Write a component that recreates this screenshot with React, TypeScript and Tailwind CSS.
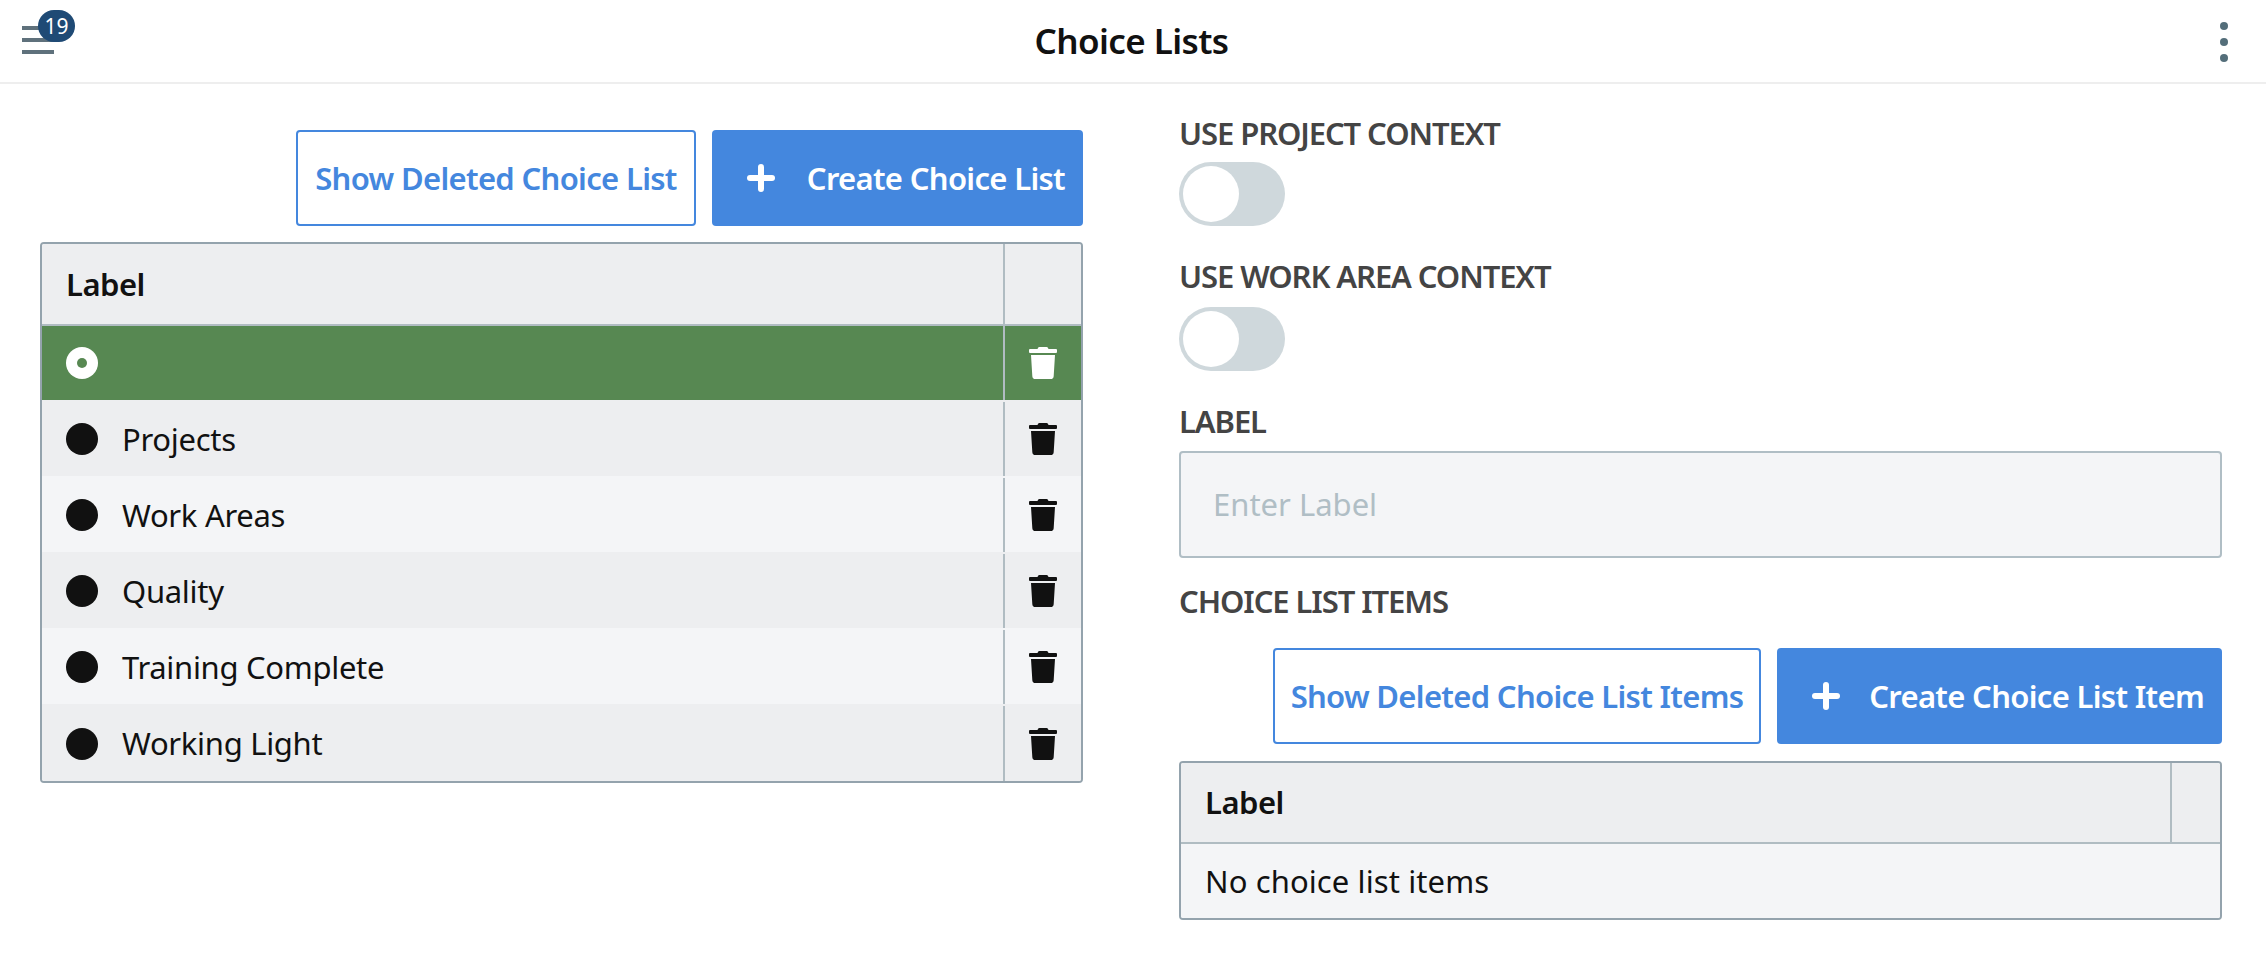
import React from "react";

const font = "font-['Noto_Sans',sans-serif]";

function TrashIcon({ className }: { className: string }) {
  return (
    <svg viewBox="0 0 448 512" className={className} fill="currentColor">
      <path d="M432 32H312l-9.4-18.7A24 24 0 0 0 281.1 0H166.8a23.72 23.72 0 0 0-21.4 13.3L136 32H16A16 16 0 0 0 0 48v32a16 16 0 0 0 16 16h416a16 16 0 0 0 16-16V48a16 16 0 0 0-16-16zM53.2 467a48 48 0 0 0 47.9 45h245.8a48 48 0 0 0 47.9-45L416 128H32z" />
    </svg>
  );
}

function PlusIcon() {
  return (
    <svg viewBox="0 0 28 28" className="w-[28px] h-[28px] shrink-0" fill="white">
      <rect x="11" y="0" width="6" height="28" rx="3" />
      <rect x="0" y="11" width="28" height="6" rx="3" />
    </svg>
  );
}

function Toggle() {
  return (
    <div className="w-[106px] h-[64px] rounded-full bg-[#cfd8dc] p-[4px]">
      <div className="w-[56px] h-[56px] rounded-full bg-white" />
    </div>
  );
}

function FieldLabel({ children }: { children: React.ReactNode }) {
  return <div className="h-[40px] text-[31px] leading-[38px] font-semibold text-[#444444] tracking-[-1.1px]">{children}</div>;
}

function Buttons({ show, create, showWidth, createWidth }: { show: string; create: string; showWidth: string; createWidth: string }) {
  return (
    <div className="flex justify-end gap-[16px]">
      <div className={`h-[96px] rounded-[4px] border-2 border-[#4487de] bg-white flex items-center justify-center text-[#4487de] text-[31px] font-semibold tracking-[-0.68px] whitespace-nowrap ${showWidth}`}>
        {show}
      </div>
      <div className={`h-[96px] rounded-[4px] bg-[#4487de] flex items-center justify-between pl-[35px] pr-[18px] text-white text-[31px] font-semibold tracking-[-0.68px] whitespace-nowrap ${createWidth}`}>
        <PlusIcon />
        {create}
      </div>
    </div>
  );
}

const rows = ["", "Projects", "Work Areas", "Quality", "Training Complete", "Working Light"];

export default function App() {
  return (
    <div className={`w-[2266px] h-[964px] bg-white overflow-hidden ${font} text-[#111111]`}>
      <header className="relative h-[84px] border-b-2 border-[#eeeeee] flex items-center justify-center pr-[3px]">
        <div className="absolute left-[22px] top-[26px] w-[32px] flex flex-col gap-[8px]">
          <div className="h-[4px] bg-[#5f717c]" />
          <div className="h-[4px] bg-[#5f717c]" />
          <div className="h-[4px] bg-[#5f717c]" />
        </div>
        <div className="absolute left-[38px] top-[10px] w-[37px] h-[32px] rounded-full bg-[#1f4a75] text-white text-[21px] leading-[32px] text-center">19</div>
        <div className="text-[35px] font-semibold tracking-[-0.6px] text-[#111111]">Choice Lists</div>
        <div className="absolute left-[2220px] top-[22px] flex flex-col gap-[8px]">
          <div className="w-[8px] h-[8px] rounded-full bg-[#546e7a]" />
          <div className="w-[8px] h-[8px] rounded-full bg-[#546e7a]" />
          <div className="w-[8px] h-[8px] rounded-full bg-[#546e7a]" />
        </div>
      </header>
      <main className="flex pl-[40px] pr-[44px] pt-[46px] gap-[96px]">
        <section className="w-[1043px] shrink-0">
          <Buttons show="Show Deleted Choice List" create="Create Choice List" showWidth="w-[400px]" createWidth="w-[371px]" />
          <div className="mt-[16px] border-2 border-[#94a3ad] rounded-[4px] overflow-hidden">
            <div className="flex h-[82px] bg-[#edeef0] border-b-2 border-[#b0bcc2]">
              <div className="flex-1 flex items-center pl-[24px] text-[31px] font-semibold tracking-[-0.5px]">Label</div>
              <div className="w-[78px] border-l-2 border-[#b0bcc2]" />
            </div>
            {rows.map((label, i) => {
              const selected = i === 0;
              const last = i === rows.length - 1;
              const bg = selected
                ? "h-[74px] bg-[#578852] text-white"
                : i % 2 === 1
                  ? "bg-[#edeef0] border-t-2 border-[#edeef0]"
                  : "bg-[#f4f5f7] border-t-2 border-[#f4f5f7]";
              const height = selected ? "" : last ? "h-[77px]" : "h-[76px]";
              return (
                <div key={i} className={`flex ${bg} ${height}`}>
                  <div className="flex-1 flex items-center pl-[24px] gap-[24px] text-[31px] tracking-[-0.3px]">
                    {selected ? (
                      <div className="w-[32px] h-[32px] rounded-full bg-white flex items-center justify-center">
                        <div className="w-[10px] h-[10px] rounded-full bg-[#578852]" />
                      </div>
                    ) : (
                      <div className="w-[32px] h-[32px] rounded-full bg-[#111111]" />
                    )}
                    <span>{label}</span>
                  </div>
                  <div className="w-[78px] border-l-2 border-[#b0bcc2] flex items-center justify-center">
                    <TrashIcon className={`w-[28px] h-[32px] ${selected ? "text-white" : "text-[#111111]"}`} />
                  </div>
                </div>
              );
            })}
          </div>
        </section>
        <section className="flex-1 -mt-[16px] min-w-0">
          <FieldLabel>USE PROJECT CONTEXT</FieldLabel>
          <div className="mt-[8px]"><Toggle /></div>
          <div className="mt-[31px]"><FieldLabel>USE WORK AREA CONTEXT</FieldLabel></div>
          <div className="mt-[10px]"><Toggle /></div>
          <div className="mt-[31px]"><FieldLabel>LABEL</FieldLabel></div>
          <div className="mt-[9px] h-[107px] border-2 border-[#b0bec5] rounded-[4px] bg-[#f4f5f7] flex items-center pl-[32px] text-[31px] tracking-[0px] text-[#b0bec5]">Enter Label</div>
          <div className="mt-[24px]"><FieldLabel>CHOICE LIST ITEMS</FieldLabel></div>
          <div className="mt-[26px]">
            <Buttons show="Show Deleted Choice List Items" create="Create Choice List Item" showWidth="w-[488px]" createWidth="w-[445px]" />
          </div>
          <div className="mt-[17px] border-2 border-[#94a3ad] rounded-[4px] overflow-hidden">
            <div className="flex h-[81px] bg-[#edeef0] border-b-2 border-[#b0bcc2]">
              <div className="flex-1 flex items-center pl-[24px] text-[31px] font-semibold tracking-[-0.5px]">Label</div>
              <div className="w-[50px] border-l-2 border-[#b0bcc2]" />
            </div>
            <div className="h-[74px] bg-[#f4f5f7] flex items-center pl-[24px] text-[31px] tracking-[0.1px]">No choice list items</div>
          </div>
        </section>
      </main>
    </div>
  );
}
